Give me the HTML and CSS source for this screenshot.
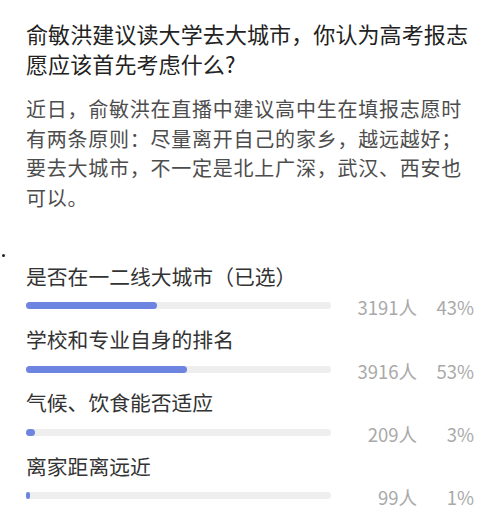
FILE: index.html
```html
<!DOCTYPE html>
<html lang="zh-CN">
<head>
<meta charset="utf-8">
<link rel="stylesheet" href="styles.css">
</head>
<body>
<div class="page">
  <h1 class="title">俞敏洪建议读大学去大城市，你认为高考报志愿应该首先考虑什么?</h1>
  <p class="desc">近日，俞敏洪在直播中建议高中生在填报志愿时有两条原则：尽量离开自己的家乡，越远越好；要去大城市，不一定是北上广深，武汉、西安也可以。</p>
  <div class="dot"></div>
  <div class="options">
    <div class="option">
      <div class="label">是否在一二线大城市（已选）</div>
      <div class="row">
        <div class="track"><div class="fill" style="width:43.03%"></div></div>
        <div class="count">3191人</div>
        <div class="pct">43%</div>
      </div>
    </div>
    <div class="option">
      <div class="label">学校和专业自身的排名</div>
      <div class="row">
        <div class="track"><div class="fill" style="width:52.81%"></div></div>
        <div class="count">3916人</div>
        <div class="pct">53%</div>
      </div>
    </div>
    <div class="option">
      <div class="label">气候、饮食能否适应</div>
      <div class="row">
        <div class="track"><div class="fill" style="width:2.82%"></div></div>
        <div class="count">209人</div>
        <div class="pct">3%</div>
      </div>
    </div>
    <div class="option">
      <div class="label">离家距离远近</div>
      <div class="row">
        <div class="track"><div class="fill" style="width:1.34%"></div></div>
        <div class="count">99人</div>
        <div class="pct">1%</div>
      </div>
    </div>
  </div>
</div>
</body>
</html>
```
FILE: styles.css
```css
html, body {
  margin: 0;
  padding: 0;
  background: #ffffff;
}
body {
  font-family: "Noto Sans CJK SC", "Noto Sans", sans-serif;
  width: 500px;
  height: 521px;
  overflow: hidden;
}
.page {
  padding: 18px 26px 0 26px;
}
.title {
  margin: 0;
  font-size: 22px;
  font-weight: 400;
  line-height: 30px;
  letter-spacing: 0.1px;
  color: #222222;
}
.desc {
  margin: 16px 0 0 0;
  font-size: 20px;
  font-weight: 400;
  line-height: 29.7px;
  letter-spacing: 0.76px;
  color: #4d4d4d;
}
.dot {
  width: 3px;
  height: 3px;
  border-radius: 50%;
  background: #222;
  margin: 41px 0 0 -24.5px;
}
.options {
  margin-top: 4px;
  display: flex;
  flex-direction: column;
  gap: 3.3px;
}
.label {
  font-size: 20.8px;
  line-height: 30px;
  color: #333333;
}
.row {
  display: flex;
  align-items: center;
  height: 30px;
}
.track {
  width: 305px;
  height: 7px;
  border-radius: 4px;
  background: #eeeeee;
  flex: none;
}
.fill {
  height: 100%;
  border-radius: 4px;
  background: #6d85e0;
}
.count, .pct {
  font-size: 18.5px;
  line-height: 30px;
  color: #a9a9a9;
  text-align: right;
  padding-top: 3px;
}
.count {
  flex: 1;
}
.pct {
  width: 57px;
  flex: none;
}
```
